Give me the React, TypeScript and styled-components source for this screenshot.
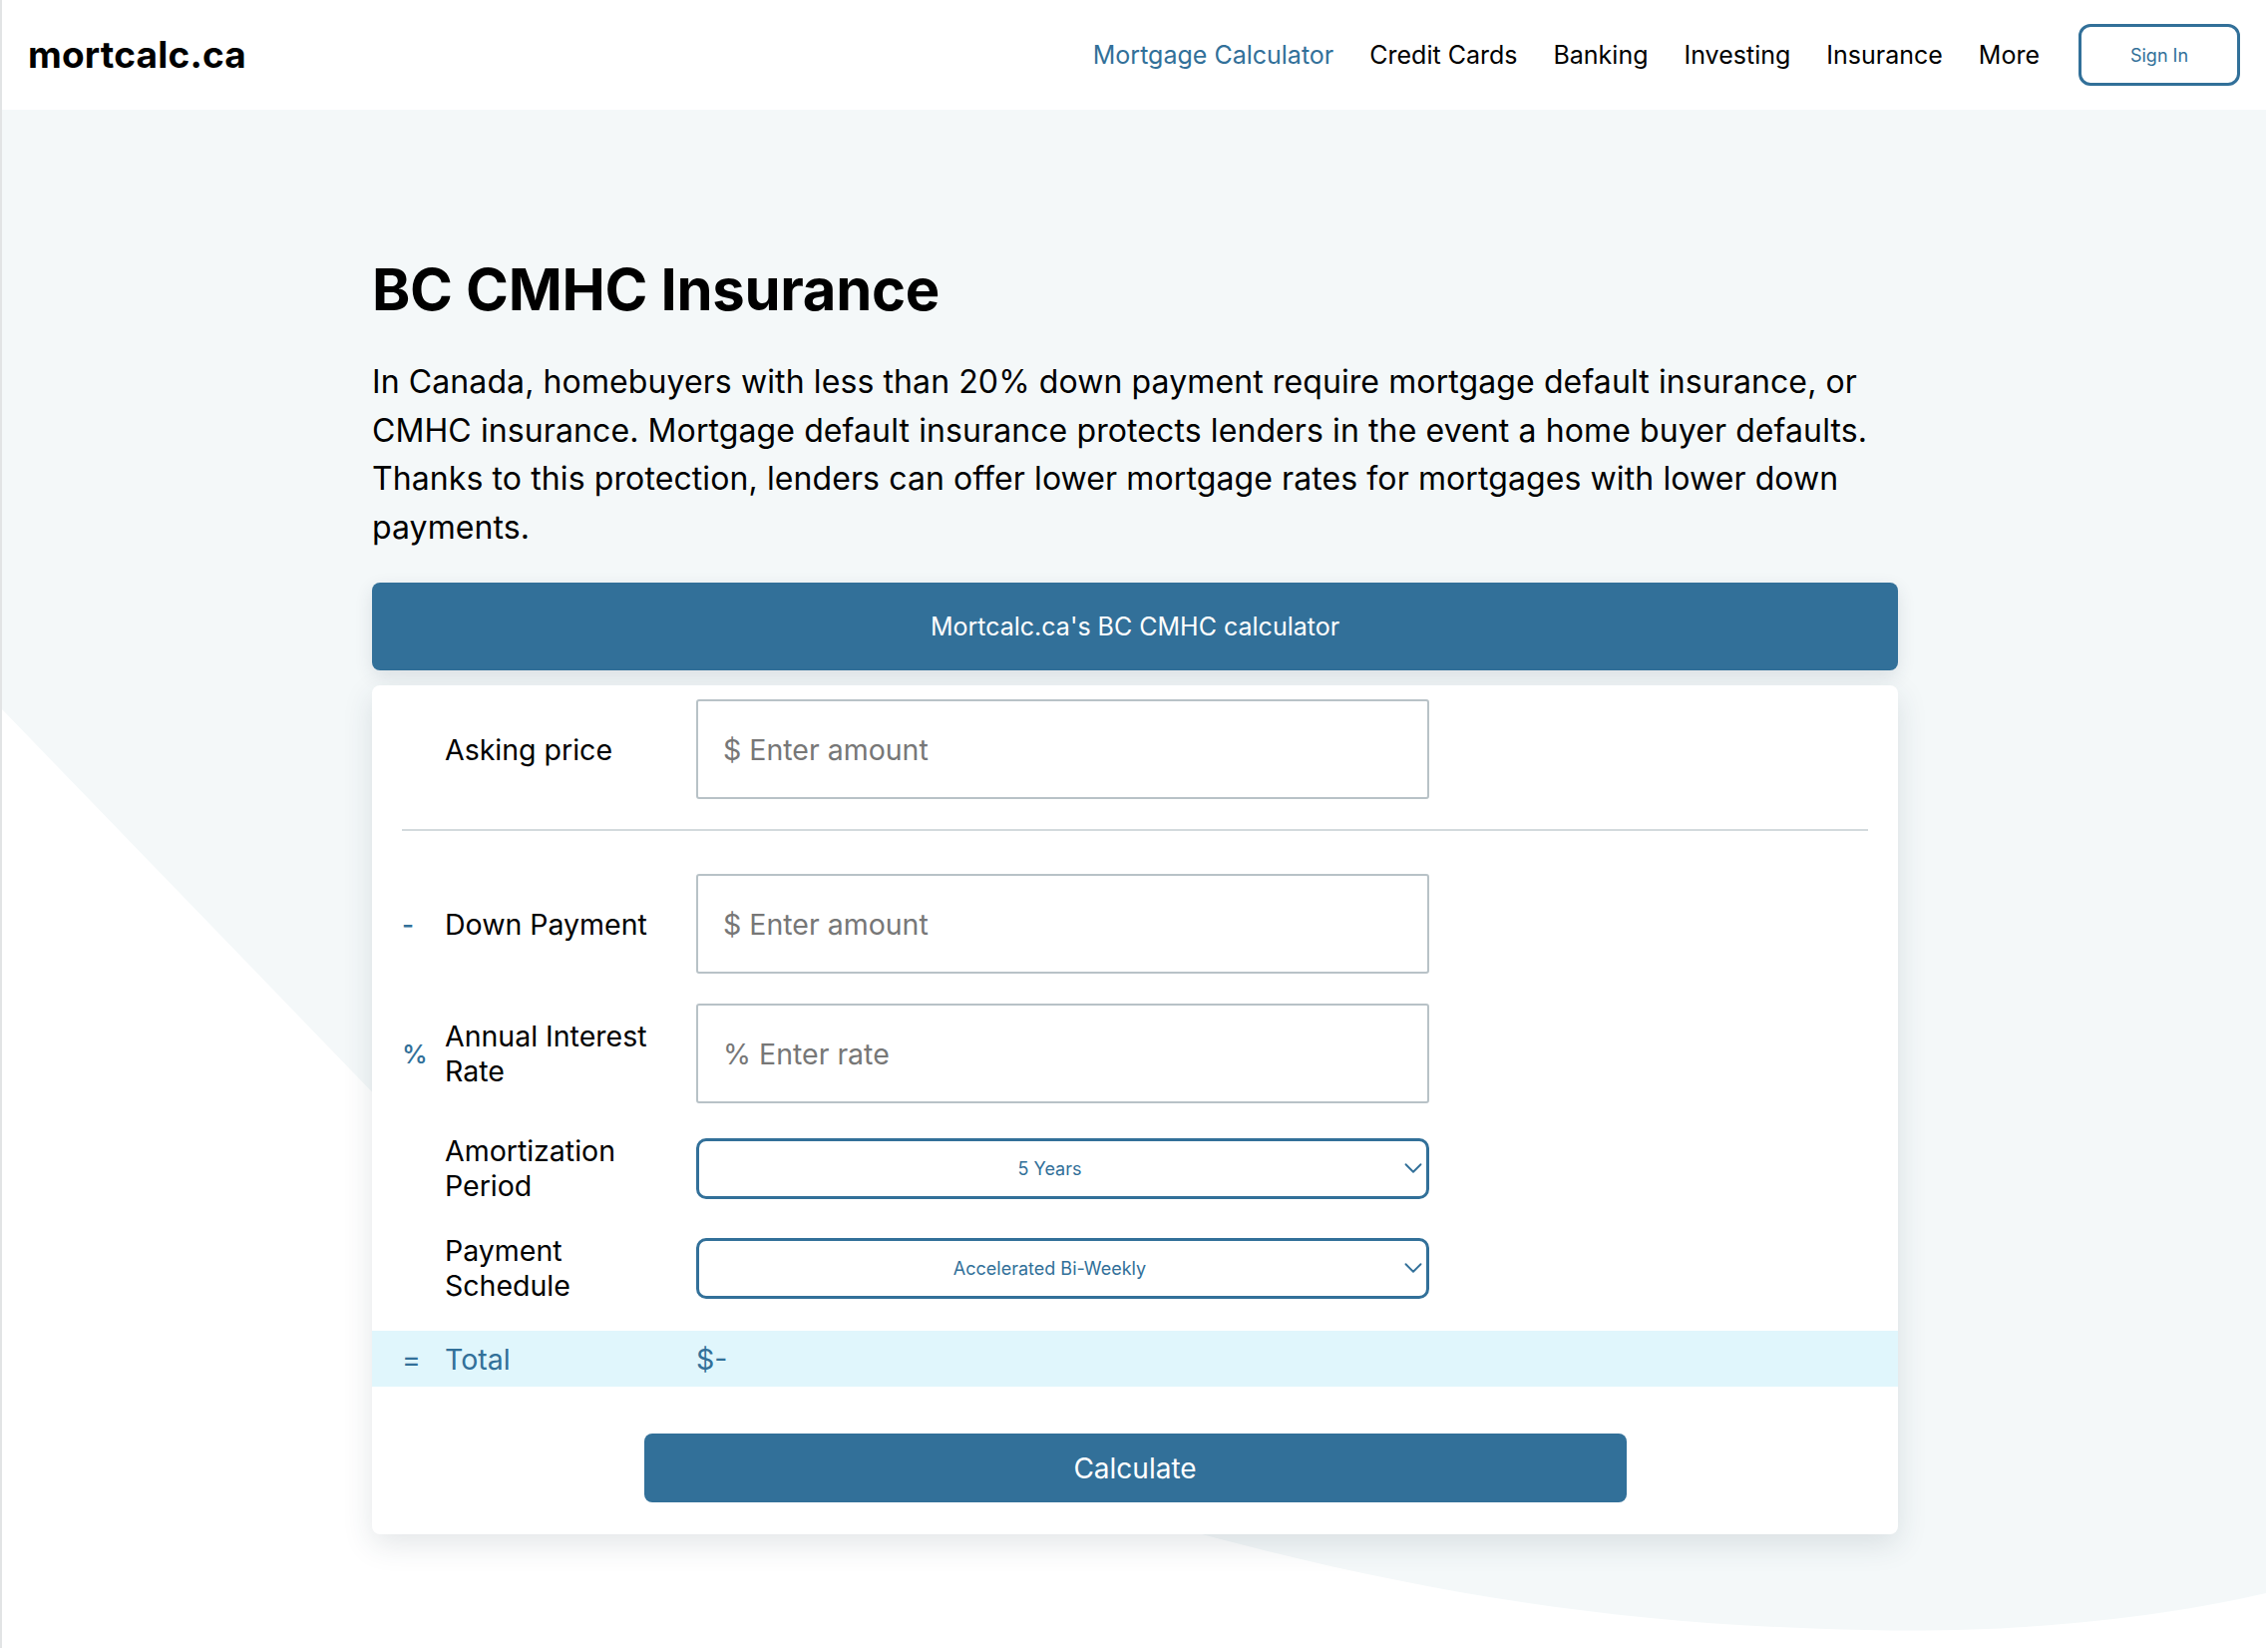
import React from "react";
import styled, { createGlobalStyle } from "styled-components";
import { ChevronDown } from "lucide-react";

const BLUE = "#327099";
const LIGHT_BG = "#f4f8f9";

const GlobalStyle = createGlobalStyle`
  html, body {
    margin: 0;
    padding: 0;
    background: #ffffff;
  }
  body {
    font-family: Inter, "Noto Sans", "Liberation Sans", sans-serif;
    color: #000;
  }
  * {
    box-sizing: border-box;
  }
`;

const Page = styled.div`
  position: relative;
  width: 100%;
  min-height: 1652px;
  overflow: hidden;
  border-left: 2px solid #e2e4e5;
`;

const Backdrop = styled.svg`
  position: absolute;
  top: 0;
  left: 0;
  width: 2274px;
  height: 1652px;
  z-index: 0;
  pointer-events: none;
`;

const Header = styled.header`
  position: relative;
  z-index: 1;
  height: 110px;
  background: #ffffff;
  display: flex;
  align-items: center;
  justify-content: space-between;
  padding: 0 28px 0 26px;
`;

const Logo = styled.div`
  font-size: 37px;
  font-weight: 700;
  letter-spacing: 0.2px;
  margin-top: -2px;
`;

const Nav = styled.nav`
  display: flex;
  align-items: center;
  gap: 36px;
`;

const NavLink = styled.a<{ $active?: boolean }>`
  font-size: 25px;
  color: ${({ $active }) => ($active ? BLUE : "#000")};
  text-decoration: none;
  cursor: pointer;
`;

const SignIn = styled.button`
  margin-left: 3px;
  width: 162px;
  height: 62px;
  border: 3px solid ${BLUE};
  border-radius: 12px;
  background: #fff;
  color: ${BLUE};
  font-family: inherit;
  font-size: 18px;
  cursor: pointer;
`;

const Main = styled.main`
  position: relative;
  z-index: 1;
  width: 1530px;
  margin: 0 auto;
  padding: 145px 0 60px;
`;

const Title = styled.h1`
  margin: 0;
  font-size: 58px;
  font-weight: 700;
  line-height: 70px;
  letter-spacing: -0.3px;
`;

const Intro = styled.p`
  margin: 34px 0 31px;
  font-size: 32px;
  line-height: 48.5px;
  letter-spacing: 0.1px;
`;

const CalcBar = styled.div`
  height: 88px;
  border-radius: 8px;
  background: ${BLUE};
  color: #fff;
  font-size: 25px;
  display: flex;
  align-items: center;
  justify-content: center;
  box-shadow: 0 6px 18px rgba(40, 60, 80, 0.12);
`;

const Card = styled.section`
  margin-top: 15px;
  background: #fff;
  border-radius: 8px;
  padding: 14px 0 32px;
  box-shadow: 0 10px 30px rgba(40, 60, 80, 0.13);
  display: flex;
  flex-direction: column;
`;

const Row = styled.div<{ $height: number; $gap: number }>`
  display: grid;
  grid-template-columns: 43px 252px 735px;
  align-items: center;
  min-height: ${({ $height }) => $height}px;
  margin-top: ${({ $gap }) => $gap}px;
  padding: 0 30px;
`;

const Symbol = styled.span`
  color: ${BLUE};
  font-size: 26px;
  font-weight: 500;
`;

const Label = styled.label`
  font-size: 28.5px;
  line-height: 35px;
  max-width: 225px;
`;

const TextInput = styled.input`
  width: 735px;
  height: 100px;
  border: 2px solid #b8c2c7;
  border-radius: 3px;
  padding: 0 25px;
  font-family: inherit;
  font-size: 28.5px;
  color: #000;
  background: #fff;
  outline: none;
  &::placeholder {
    color: #777777;
  }
`;

const Divider = styled.hr`
  margin: 30px 30px 0;
  border: none;
  border-top: 2px solid #d3dadd;
`;

const SelectWrap = styled.div`
  position: relative;
  width: 735px;
  height: 61px;
  svg {
    position: absolute;
    right: 1px;
    top: 50%;
    transform: translateY(-50%);
    color: ${BLUE};
    pointer-events: none;
  }
`;

const Select = styled.select`
  width: 100%;
  height: 100%;
  appearance: none;
  border: 3px solid ${BLUE};
  border-radius: 10px;
  background: #fff;
  color: ${BLUE};
  font-family: inherit;
  font-size: 18px;
  text-align: center;
  text-align-last: center;
  padding: 0 56px 0 30px;
  outline: none;
`;

const TotalRow = styled.div`
  display: grid;
  grid-template-columns: 43px 252px 1fr;
  align-items: center;
  height: 56px;
  margin-top: 28px;
  padding: 0 30px;
  background: #e0f6fc;
  color: ${BLUE};
  font-size: 28.5px;
`;

const Calculate = styled.button`
  align-self: center;
  margin-top: 47px;
  width: 985px;
  height: 69px;
  border: none;
  border-radius: 8px;
  background: ${BLUE};
  color: #fff;
  font-family: inherit;
  font-size: 28px;
  cursor: pointer;
`;

const navItems = ["Mortgage Calculator", "Credit Cards", "Banking", "Investing", "Insurance", "More"];

export default function App() {
  return (
    <>
      <GlobalStyle />
      <Page>
        <Backdrop viewBox="0 0 2274 1652" preserveAspectRatio="none">
          <path
            d="M0,110 H2270 V1597 C2180,1618 2040,1638 1870,1634 C1650,1630 1450,1604 1203,1538 C1003,1486 860,1400 560,1290 L0,711 Z"
            fill={LIGHT_BG}
          />
        </Backdrop>
        <Header>
          <Logo>mortcalc.ca</Logo>
          <Nav>
            {navItems.map((item, i) => (
              <NavLink key={item} $active={i === 0}>
                {item}
              </NavLink>
            ))}
            <SignIn>Sign In</SignIn>
          </Nav>
        </Header>
        <Main>
          <Title>BC CMHC Insurance</Title>
          <Intro>
            In Canada, homebuyers with less than 20% down payment require mortgage default insurance, or
            CMHC insurance. Mortgage default insurance protects lenders in the event a home buyer defaults.
            Thanks to this protection, lenders can offer lower mortgage rates for mortgages with lower down
            payments.
          </Intro>
          <CalcBar>Mortcalc.ca's BC CMHC calculator</CalcBar>
          <Card>
            <Row $height={100} $gap={0}>
              <Symbol />
              <Label>Asking price</Label>
              <TextInput placeholder="$ Enter amount" />
            </Row>
            <Divider />
            <Row $height={100} $gap={43}>
              <Symbol>-</Symbol>
              <Label>Down Payment</Label>
              <TextInput placeholder="$ Enter amount" />
            </Row>
            <Row $height={100} $gap={30}>
              <Symbol>%</Symbol>
              <Label>Annual Interest Rate</Label>
              <TextInput placeholder="% Enter rate" />
            </Row>
            <Row $height={70} $gap={30}>
              <Symbol />
              <Label>Amortization Period</Label>
              <SelectWrap>
                <Select defaultValue="5">
                  <option value="5">5 Years</option>
                  <option value="10">10 Years</option>
                  <option value="15">15 Years</option>
                  <option value="20">20 Years</option>
                  <option value="25">25 Years</option>
                  <option value="30">30 Years</option>
                </Select>
                <ChevronDown size={30} strokeWidth={1.5} />
              </SelectWrap>
            </Row>
            <Row $height={70} $gap={30}>
              <Symbol />
              <Label>Payment Schedule</Label>
              <SelectWrap>
                <Select defaultValue="abw">
                  <option value="abw">Accelerated Bi-Weekly</option>
                  <option value="bw">Bi-Weekly</option>
                  <option value="m">Monthly</option>
                  <option value="w">Weekly</option>
                </Select>
                <ChevronDown size={30} strokeWidth={1.5} />
              </SelectWrap>
            </Row>
            <TotalRow>
              <span>=</span>
              <span>Total</span>
              <span>$-</span>
            </TotalRow>
            <Calculate>Calculate</Calculate>
          </Card>
        </Main>
      </Page>
    </>
  );
}
